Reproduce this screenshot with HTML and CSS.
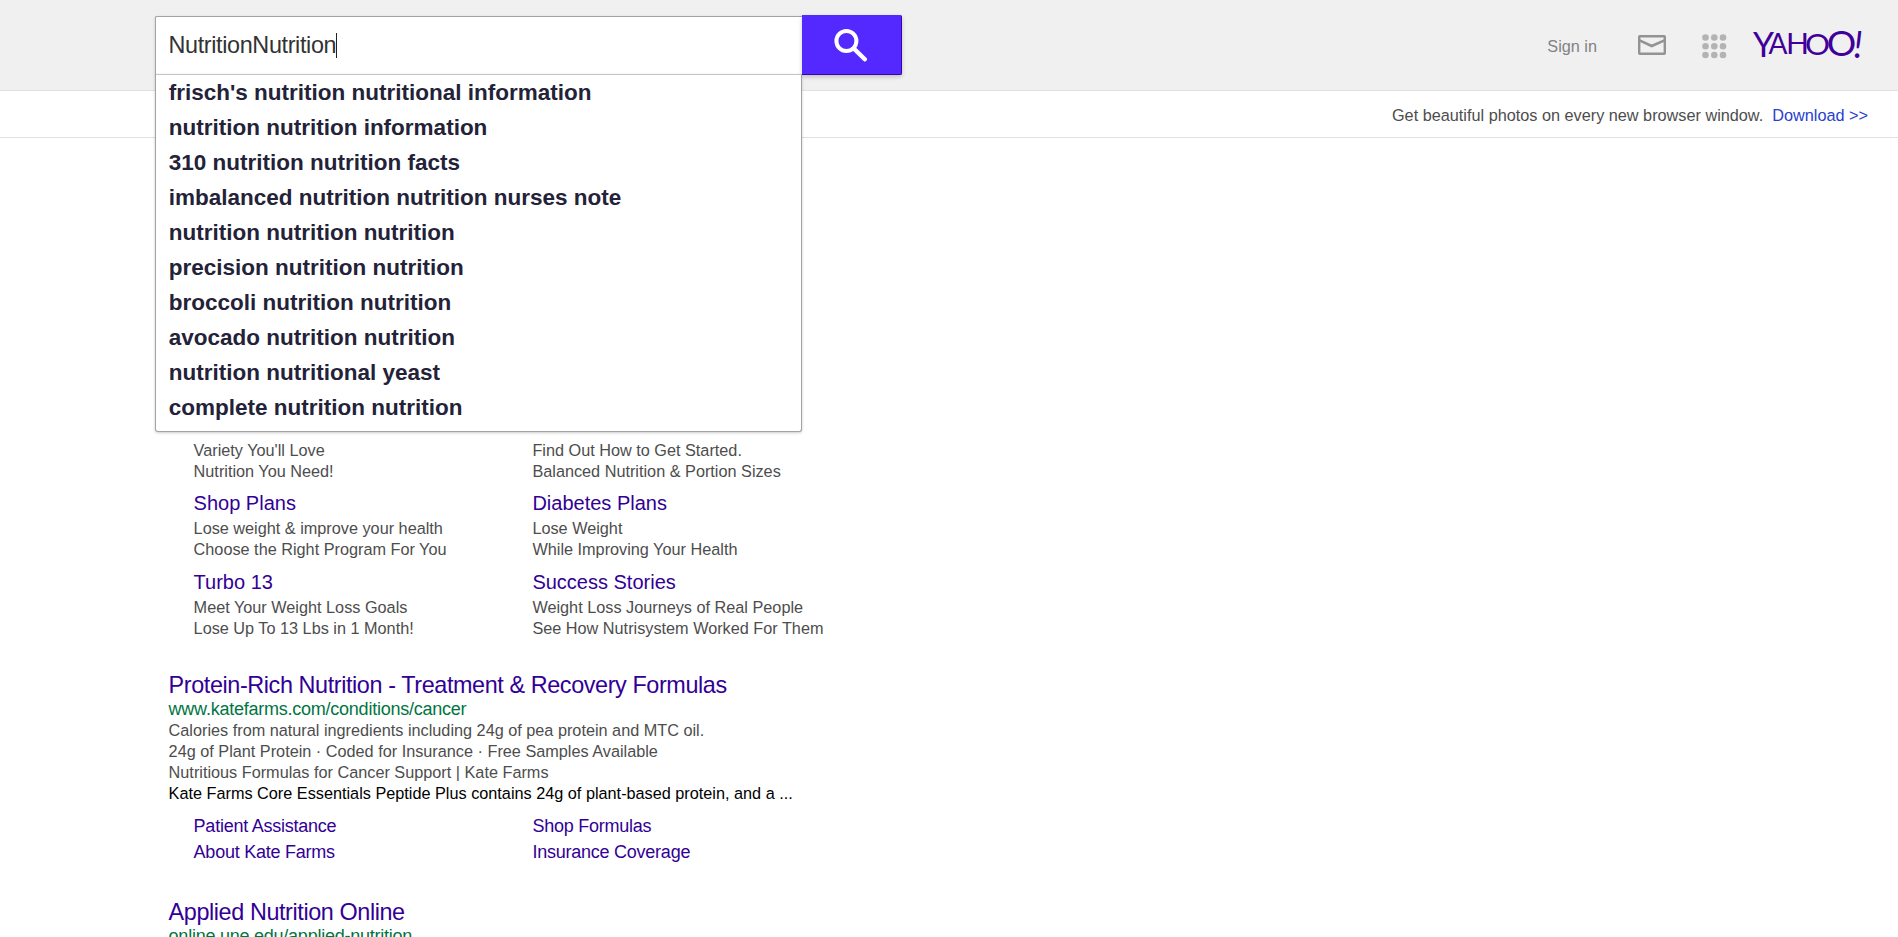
FILE: index.html
```html
<!DOCTYPE html>
<html lang="en">
<head>
<meta charset="utf-8">
<title>Yahoo Search</title>
<link rel="stylesheet" href="styles.css">
</head>
<body>
<header class="header">
  <form class="search">
    <div class="search-box">
      <span class="search-text">NutritionNutrition</span><span class="caret"></span>
    </div>
    <button class="search-button" type="button" aria-label="Search">
      <svg width="34" height="34" viewBox="0 0 34 34" fill="none" stroke="#fff"><circle cx="12.4" cy="13" r="10" stroke-width="4"/><path d="M19.8 20.5 30.8 31.3" stroke-width="4.4" stroke-linecap="round"/></svg>
    </button>
    <ul class="suggestions">
      <li>frisch's nutrition nutritional information</li>
      <li>nutrition nutrition information</li>
      <li>310 nutrition nutrition facts</li>
      <li>imbalanced nutrition nutrition nurses note</li>
      <li>nutrition nutrition nutrition</li>
      <li>precision nutrition nutrition</li>
      <li>broccoli nutrition nutrition</li>
      <li>avocado nutrition nutrition</li>
      <li>nutrition nutritional yeast</li>
      <li>complete nutrition nutrition</li>
    </ul>
  </form>
  <nav class="tools">
    <a class="sign-in">Sign in</a>
    <svg class="mail" width="28" height="20" viewBox="0 0 28 20" fill="none" stroke="#939393" stroke-width="2.4"><rect x="1.2" y="1.2" width="25.6" height="17.6" rx=".6"/><path d="M1.5 5.4 13.7 11 26.5 5.4" stroke-width="2.6"/></svg>
    <svg class="apps" width="25" height="25" viewBox="0 0 25 25" fill="#b3b3b3"><circle cx="3.5" cy="3.5" r="3.3"/><circle cx="12.3" cy="3.5" r="3.3"/><circle cx="21" cy="3.5" r="3.3"/><circle cx="3.5" cy="12.3" r="3.3"/><circle cx="12.3" cy="12.3" r="3.3"/><circle cx="21" cy="12.3" r="3.3"/><circle cx="3.5" cy="21" r="3.3"/><circle cx="12.3" cy="21" r="3.3"/><circle cx="21" cy="21" r="3.3"/></svg>
    <svg class="logo" width="112" height="30" viewBox="0 0 112 30" fill="#400099">
      <text x="0" y="27" font-size="35" textLength="21" lengthAdjust="spacingAndGlyphs">Y</text>
      <text x="15.5" y="24.2" font-size="28.5" textLength="19" lengthAdjust="spacingAndGlyphs">A</text>
      <text x="33" y="24.2" font-size="28.5" textLength="23" lengthAdjust="spacingAndGlyphs">H</text>
      <text x="52" y="24.5" font-size="29.5" textLength="25" lengthAdjust="spacingAndGlyphs">O</text>
      <text x="73.8" y="26.4" font-size="34" textLength="29.5" lengthAdjust="spacingAndGlyphs">O</text>
      <text x="100.5" y="27.6" font-size="36" font-style="italic">!</text>
    </svg>
  </nav>
</header>
<div class="banner">
  <span>Get beautiful photos on every new browser window.</span>
  <a class="download">Download &gt;&gt;</a>
</div>
<main class="results">
  <section class="sitelinks">
    <div><p>Variety You'll Love</p><p>Nutrition You Need!</p></div>
    <div><p>Find Out How to Get Started.</p><p>Balanced Nutrition &amp; Portion Sizes</p></div>
    <div><h4>Shop Plans</h4><p>Lose weight &amp; improve your health</p><p>Choose the Right Program For You</p></div>
    <div><h4>Diabetes Plans</h4><p>Lose Weight</p><p>While Improving Your Health</p></div>
    <div><h4>Turbo 13</h4><p>Meet Your Weight Loss Goals</p><p>Lose Up To 13 Lbs in 1 Month!</p></div>
    <div><h4>Success Stories</h4><p>Weight Loss Journeys of Real People</p><p>See How Nutrisystem Worked For Them</p></div>
  </section>
  <article class="result">
    <h3>Protein-Rich Nutrition - Treatment &amp; Recovery Formulas</h3>
    <cite>www.katefarms.com/conditions/cancer</cite>
    <p>Calories from natural ingredients including 24g of pea protein and MTC oil.</p>
    <p>24g of Plant Protein · Coded for Insurance · Free Samples Available</p>
    <p>Nutritious Formulas for Cancer Support | Kate Farms</p>
    <p class="strong">Kate Farms Core Essentials Peptide Plus contains 24g of plant-based protein, and a ...</p>
    <div class="quick-links"><a>Patient Assistance</a><a>Shop Formulas</a><a>About Kate Farms</a><a>Insurance Coverage</a></div>
  </article>
  <article class="result">
    <h3>Applied Nutrition Online</h3>
    <cite>online.une.edu/applied-nutrition</cite>
  </article>
</main>
</body>
</html>
```
FILE: styles.css
```css
* { box-sizing: border-box; }
body {
  margin: 0;
  height: 937px;
  overflow: hidden;
  background: #fff;
  font: 16.25px/21px "Liberation Sans", Arial, sans-serif;
  color: #4d4d4d;
}
p, h3, h4, ul { margin: 0; padding: 0; font-weight: normal; }
.header {
  display: flex;
  justify-content: space-between;
  height: 91px;
  padding: 15px 33px 0 155px;
  background: #f0f0f0;
  border-bottom: 1px solid #e0e0e0;
}
.search { position: relative; display: flex; height: 60px; }
.search-box {
  display: flex;
  align-items: center;
  width: 647px;
  height: 59px;
  margin-top: 1px;
  padding: 0 0 1px 12.5px;
  background: #fff;
  border: 1px solid #a0a3a8;
  border-right: 0;
  border-radius: 2px 0 0 0;
  box-shadow: 0 1px 3px rgba(0,0,0,.18);
  font-size: 23.4px;
  letter-spacing: -.36px;
  color: #333;
}
.search-text { line-height: 27px; }
.caret { width: 1px; height: 25px; background: #222; }
.search-button {
  position: relative;
  width: 100px;
  height: 60px;
  padding: 0;
  background: #5429ff;
  border: 0;
  border-right: 1px solid #3c00b4;
  border-bottom: 1px solid #3c00b4;
  border-radius: 0 2px 2px 0;
  box-shadow: 0 2px 4px rgba(0,0,0,.2);
}
.search-button svg { display: block; margin: 1px 0 0 32px; }
.suggestions {
  position: absolute;
  z-index: 2;
  top: 59px;
  left: 0;
  width: 647px;
  height: 358px;
  list-style: none;
  padding-left: 12.7px;
  background: #fff;
  border: 1px solid #a0a3a8;
  border-top-color: #c4c5c8;
  border-radius: 0 0 3px 3px;
  box-shadow: 0 1px 3px rgba(0,0,0,.2);
  font-size: 22.5px;
  font-weight: bold;
  line-height: 35px;
  color: #232238;
}
.tools { display: flex; align-items: flex-start; }
.sign-in { margin: 21px 41px 0 0; color: #828282; }
.mail { margin: 20px 36px 0 0; }
.apps { margin: 18.5px 26px 0 0; }
.logo { margin-top: 15px; font-family: Lato, sans-serif; overflow: visible; }
.banner {
  display: flex;
  justify-content: flex-end;
  align-items: center;
  gap: 9px;
  height: 47px;
  padding: 2px 30px 0 0;
  border-bottom: 1px solid #e0e0e0;
}
.download { color: #2840d0; }
.results { padding: 302px 0 0 168.6px; }
.sitelinks, .quick-links {
  display: grid;
  grid-template-columns: 338.8px 339px;
  padding-left: 25px;
}
.sitelinks { row-gap: 9.4px; }
h4 { margin-bottom: 3px; font-size: 20px; line-height: 24px; color: #320096; }
.result { margin-top: 33.2px; }
.result + .result { margin-top: 34px; }
h3 { font-size: 23.4px; letter-spacing: -.4px; line-height: 26px; color: #320096; }
cite {
  display: block;
  font-size: 18px;
  letter-spacing: -.24px;
  line-height: 22px;
  font-style: normal;
  color: #007542;
}
.strong { color: #000; }
.quick-links {
  margin-top: 9px;
  font-size: 18px;
  letter-spacing: -.24px;
  line-height: 26px;
  color: #320096;
}
```
